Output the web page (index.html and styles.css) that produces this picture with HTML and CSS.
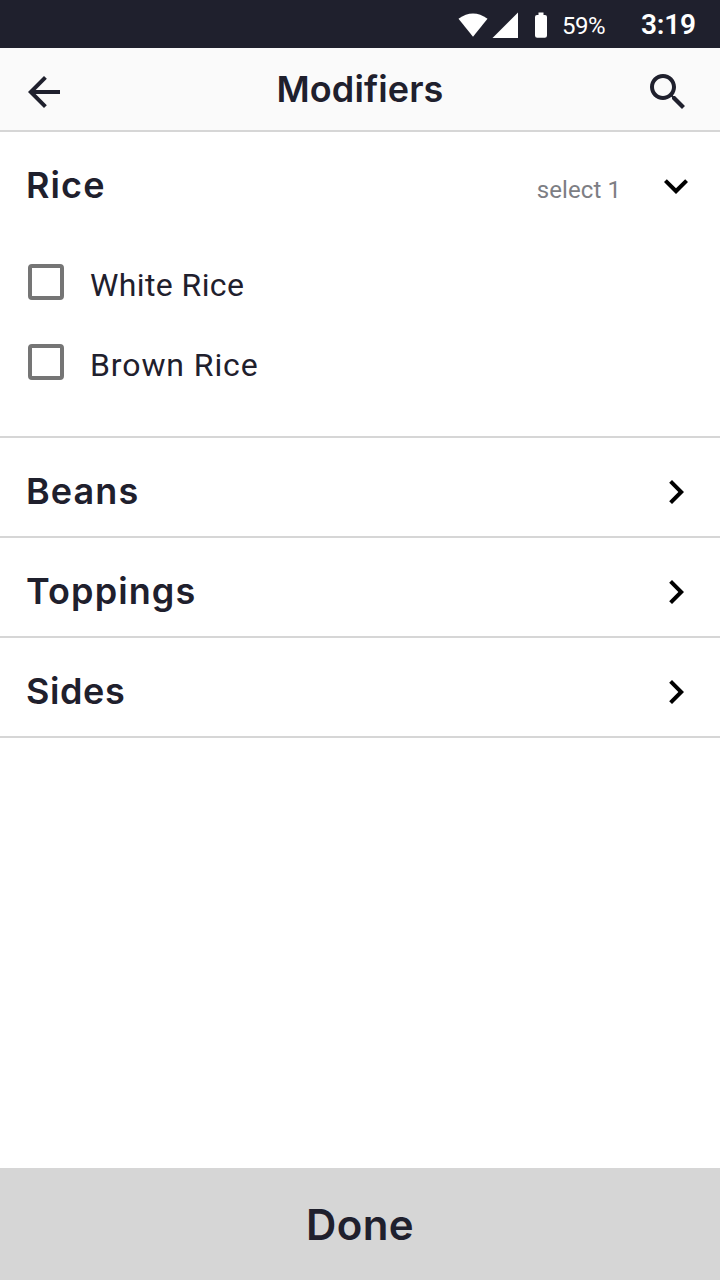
FILE: index.html
```html
<!DOCTYPE html>
<html lang="en">
<head>
<meta charset="utf-8">
<title>Modifiers</title>
<link rel="stylesheet" href="styles.css">
</head>
<body>
<div class="screen">
  <div class="status">
    <svg class="status-icons" width="92" height="48" viewBox="0 0 92 48" fill="#fff">
      <path d="M.5 18.700Q15 8.200 29.500 18.700L15 36.800z"/>
      <path d="M60 12.500V38H34.500z"/>
      <path d="M80.500 12.500h5V15H87q2 0 2 2v18.500q0 2.200-2.200 2.200h-7.600q-2.200 0-2.200-2.200V17q0-2 2-2h1.500z"/>
    </svg>
    <span class="battery">59%</span>
    <span class="clock">3:19</span>
  </div>
  <header class="header">
    <svg class="icon" viewBox="0 0 24 24"><path d="M20 11H7.830l5.590-5.590L12 4l-8 8 8 8 1.410-1.410L7.830 13H20v-2z"/></svg>
    <h1 class="title">Modifiers</h1>
    <svg class="icon" viewBox="0 0 24 24"><path d="M15.500 14h-.79l-.28-.27C15.410 12.590 16 11.110 16 9.500 16 5.910 13.090 3 9.500 3S3 5.910 3 9.500 5.910 16 9.500 16c1.610 0 3.090-.59 4.230-1.570l.27.28v.79l5 4.990L20.490 19l-4.990-5zm-6 0C7.010 14 5 11.990 5 9.500S7.010 5 9.500 5 14 7.010 14 9.500 11.990 14 9.500 14z"/></svg>
  </header>
  <main class="groups">
    <section class="group">
      <div class="row open">
        <h2 class="name rice">Rice</h2>
        <span class="hint">select 1</span>
        <svg class="chevron" viewBox="0 0 24 24"><path d="M7.410 8.590L12 13.170l4.590-4.580L18 10l-6 6-6-6z"/></svg>
      </div>
      <div class="options">
        <label class="option"><span class="box"></span><span class="label white">White Rice</span></label>
        <label class="option"><span class="box"></span><span class="label brown">Brown Rice</span></label>
      </div>
    </section>
    <section class="group row">
      <h2 class="name beans">Beans</h2>
      <svg class="chevron" viewBox="0 0 24 24"><path d="M8.590 16.590L13.170 12 8.590 7.410 10 6l6 6-6 6z"/></svg>
    </section>
    <section class="group row">
      <h2 class="name toppings">Toppings</h2>
      <svg class="chevron" viewBox="0 0 24 24"><path d="M8.590 16.590L13.170 12 8.590 7.410 10 6l6 6-6 6z"/></svg>
    </section>
    <section class="group row">
      <h2 class="name sides">Sides</h2>
      <svg class="chevron" viewBox="0 0 24 24"><path d="M8.590 16.590L13.170 12 8.590 7.410 10 6l6 6-6 6z"/></svg>
    </section>
  </main>
  <button class="done">Done</button>
</div>
</body>
</html>
```
FILE: styles.css
```css
* { box-sizing: border-box; }
body { margin: 0; background: #fff; font-family: Roboto, "Liberation Sans", sans-serif; color: #1f202d; }
.screen { width: 720px; height: 1280px; display: flex; flex-direction: column; overflow: hidden; }
.status { height: 48px; background: #1f202d; color: #fff; display: flex; align-items: center; padding-left: 458px; line-height: 48px; white-space: nowrap; }
.battery { width: 79px; margin-left: 12px; font-size: 24px; letter-spacing: -0.5px; padding-top: 3px; }
.clock { font-size: 28px; font-weight: 600; letter-spacing: -0.2px; padding-top: 2px; }
.header { height: 84px; background: #fafafa; border-bottom: 2px solid #d6d6d6; display: flex; align-items: center; justify-content: space-between; padding: 1px 28px 0 20px; }
.icon { width: 48px; height: 48px; fill: #1f202d; margin-top: 5px; }
.title { margin: 0; font: 600 36px/48px Inter, Roboto, sans-serif; letter-spacing: 0.1px; padding: 0 0 2px 8px; }
.groups { flex: 1; }
.group { border-bottom: 2px solid #d6d6d6; }
.row { height: 100px; padding: 10px 20px 0 26px; display: flex; align-items: center; }
.row.open { height: 108px; padding-top: 0; }
.name { margin: 0; flex: 1; font: 600 36px/48px Inter, Roboto, sans-serif; letter-spacing: 1.1px; padding-bottom: 2px; }
.sides { letter-spacing: 0.6px; }
.hint { font-size: 24px; letter-spacing: 0.1px; color: #7d7e84; padding-top: 7px; margin-right: 31px; }
.chevron { width: 48px; height: 48px; fill: #000; }
.options { padding: 2px 0 34px 28px; }
.option { height: 80px; display: flex; align-items: center; }
.box { width: 36px; height: 36px; border: 4px solid #757575; border-radius: 4px; }
.label { font-size: 32px; letter-spacing: 0.4px; line-height: 48px; padding: 6px 0 0 26px; }
.brown { letter-spacing: 0.9px; }
.done { height: 112px; border: 0; background: #d6d6d6; color: #1f202d; font: 600 42px/48px Inter, Roboto, sans-serif; letter-spacing: 0.4px; padding: 1px 0 0; }
```
